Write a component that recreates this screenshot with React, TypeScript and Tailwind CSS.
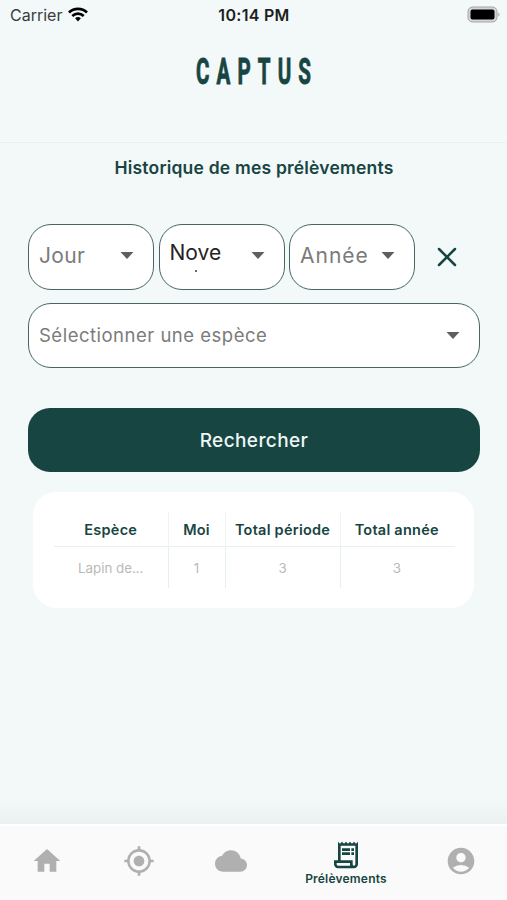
import { useState } from "react";
import clsx from "clsx";
import type { IconType } from "react-icons";
import {
  MdAccountCircle,
  MdCloud,
  MdHome,
  MdMyLocation,
  MdOutlineReceiptLong,
} from "react-icons/md";

interface Tab {
  id: string;
  icon: IconType;
  label?: string;
}

const tabs: Tab[] = [
  { id: "home", icon: MdHome },
  { id: "map", icon: MdMyLocation },
  { id: "weather", icon: MdCloud },
  { id: "history", icon: MdOutlineReceiptLong, label: "Prélèvements" },
  { id: "account", icon: MdAccountCircle },
];

const rows = [{ espece: "Lapin de...", mois: 1, periode: 3, annee: 3 }];

function StatusBar() {
  return (
    <div className="grid h-[30px] grid-cols-3 items-center pl-[10px] pr-[7px] text-[#1c1f20]">
      <div className="flex items-center gap-[6px]">
        <span className="text-[16px] text-[#3a3d3e]">Carrier</span>
        <svg viewBox="0 0 20 15" className="-mt-px h-[15px] w-5" fill="none" stroke="#000" strokeWidth="2.7">
          <path d="M1 5.5C6 .6 14 .6 19 5.5" />
          <path d="M4.3 9C7.6 5.9 12.4 5.9 15.7 9" />
          <path d="M7.1 11.3a4.2 4.2 0 0 1 5.8 0L10 14.4z" fill="#000" stroke="none" />
        </svg>
      </div>
      <span className="-ml-[2px] text-center text-[16px] font-semibold tracking-[0.3px]">10:14 PM</span>
      <svg viewBox="0 0 33 17" className="-mt-[2px] h-[17px] w-[33px] justify-self-end">
        <rect x="1" y="1" width="29" height="15" rx="4.5" fill="#d3d5d5" stroke="#a4a6a6" />
        <rect x="3.5" y="3.5" width="24" height="10" rx="2" fill="#000" />
        <path d="M31.3 6.5v4c1.6-.6 1.6-3.4 0-4z" fill="#a4a6a6" />
      </svg>
    </div>
  );
}

function Arrow() {
  return (
    <svg viewBox="0 0 14 7" className="h-[7px] w-[14px] shrink-0">
      <path d="M.5 0h13L7 7z" fill="#5f5f5f" />
    </svg>
  );
}

function Select({ label, className }: { label: string; className: string }) {
  return (
    <button
      className={clsx(
        "flex shrink-0 items-center justify-between rounded-[23px] border border-[#456663] bg-white pl-[10px] text-left",
        className
      )}
    >
      <span className="whitespace-nowrap">{label}</span>
      <Arrow />
    </button>
  );
}

export default function App() {
  const [active, setActive] = useState("history");

  return (
    <div className="flex h-[900px] w-[507px] flex-col overflow-hidden bg-[#f3f8f9] font-['Inter',sans-serif] text-[#174542]">
      <header className="h-[143px] border-b border-[#e6f1f0]">
        <StatusBar />
        <div className="mt-[23px] flex h-[38px] items-center justify-center">
          <span className="origin-center scale-x-[0.57] whitespace-nowrap pl-[14px] font-['Roboto',sans-serif] text-[36px] font-bold leading-none tracking-[12.5px] [-webkit-text-stroke:0.9px_#174542]">
            CAPTUS
          </span>
        </div>
      </header>

      <main className="flex flex-1 flex-col pl-7 pr-[27px]">
        <h1 className="mt-[13px] text-center text-[17.5px] font-semibold leading-6 tracking-[0.2px]">
          Historique de mes prélèvements
        </h1>

        <div className="mt-[44px] flex gap-[4.5px]">
          <Select label="Jour" className="h-[66px] w-[126px] pr-[19px] pb-[3px] text-[21px] tracking-[0.3px] text-[#7b7b7b]" />
          <div className="relative">
            <Select label="Nove" className="h-[66px] w-[126px] pr-[19px] pb-[8px] text-[21px] text-[#242424] [&>svg]:mt-[5px]" />
            {/* tip of the wrapped second line */}
            <span className="absolute left-[36px] top-[46px] h-[2px] w-[2px] bg-[#6a6a6a]" />
          </div>
          <Select label="Année" className="h-[66px] w-[126px] pr-[19px] pb-[3px] text-[21px] tracking-[1px] text-[#7b7b7b]" />
          <button className="flex flex-1 items-center justify-center pr-[5px]">
            <svg viewBox="0 0 20 20" className="h-5 w-5" stroke="#174542" strokeWidth="2.5" strokeLinecap="round">
              <path d="M2 2l16 16M18 2L2 18" />
            </svg>
          </button>
        </div>

        <Select
          label="Sélectionner une espèce"
          className="mt-[13px] h-[65px] pr-[19px] text-[18.5px] tracking-[0.5px] text-[#7b7b7b]"
        />

        <button className="mt-[40px] h-16 shrink-0 rounded-[22px] bg-[#174542] pt-[3px] text-[19px] font-medium tracking-[0.4px] text-[#eff6f6]">
          Rechercher
        </button>

        <section className="ml-[5px] mr-[6px] mt-5 h-[116px] rounded-[23px] bg-white px-[21px] pt-5">
          <table className="w-[401px] table-fixed border-collapse text-center">
            <colgroup>
              <col className="w-[114px]" />
              <col className="w-[57px]" />
              <col className="w-[115px]" />
              <col className="w-[115px]" />
            </colgroup>
            <thead>
              <tr className="h-[34px] divide-x divide-[#eef4f4] border-b border-[#e9f0f0] text-[14.5px] leading-5 tracking-[0.25px]">
                <th className="whitespace-nowrap p-0 pt-[2px] font-semibold">Espèce</th>
                <th className="whitespace-nowrap p-0 pt-[2px] font-semibold">Moi</th>
                <th className="whitespace-nowrap p-0 pt-[2px] font-semibold">Total période</th>
                <th className="whitespace-nowrap p-0 pt-[2px] pr-[2px] font-semibold">Total année</th>
              </tr>
            </thead>
            <tbody>
              {rows.map((r) => (
                <tr key={r.espece} className="h-[42px] divide-x divide-[#e6efef] text-[13.3px] text-[#b9b9b9]">
                  <td className="p-0 pt-[3px]">{r.espece}</td>
                  <td className="p-0 pt-[3px]">{r.mois}</td>
                  <td className="p-0 pt-[3px]">{r.periode}</td>
                  <td className="p-0 pt-[3px] pr-[2px]">{r.annee}</td>
                </tr>
              ))}
            </tbody>
          </table>
        </section>
      </main>

      <div className="h-[26px] bg-linear-to-b from-[#f3f8f9] to-[#ebf1f1]" />
      <nav className="flex h-[76px] border-t-2 border-white bg-[#fafafa] pl-px">
        {tabs.map((tab) => (
          <button
            key={tab.id}
            onClick={() => setActive(tab.id)}
            className={clsx(
              "flex shrink-0 flex-col items-center",
              active === tab.id ? "w-[138px] pt-[13px] text-[#174542]" : "w-[92px] pt-[19px] text-[#b0b0b0]"
            )}
          >
            <tab.icon className="size-8 shrink-0" />
            {active === tab.id && tab.label && (
              <span className="text-[12px] font-semibold leading-4 tracking-[0.2px]">{tab.label}</span>
            )}
          </button>
        ))}
      </nav>
    </div>
  );
}
